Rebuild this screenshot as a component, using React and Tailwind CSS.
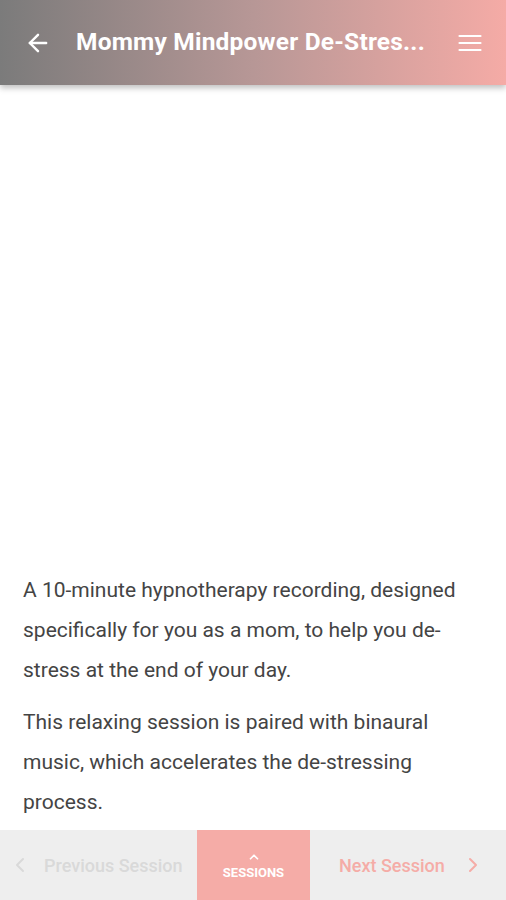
import { ArrowLeft, ChevronLeft, ChevronRight, ChevronUp } from 'lucide-react'

export default function App() {
    return (
        <div className="flex flex-col h-[900px] w-[506px] bg-white font-['Roboto',sans-serif] overflow-hidden">
            <header className="relative z-10 flex items-center h-[85px] shrink-0 bg-gradient-to-r from-[#7b7b7b] via-[#b79796] to-[#f5aba6] shadow-[0_3px_6px_rgba(0,0,0,0.25)]">
                <button className="w-[76px] flex justify-center text-white">
                    <ArrowLeft size={28} strokeWidth={2.1} />
                </button>
                <h1 className="flex-1 whitespace-nowrap text-white font-bold text-[24.5px] tracking-[0.2px]">
                    Mommy Mindpower De-Stres...
                </h1>
                <button className="w-[72px] flex justify-center text-white">
                    <svg width="24" height="18" viewBox="0 0 24 18" fill="none" stroke="currentColor" strokeWidth="2.2" strokeLinecap="round">
                        <line x1="1.5" y1="2" x2="22.5" y2="2" />
                        <line x1="1.5" y1="9" x2="22.5" y2="9" />
                        <line x1="1.5" y1="16" x2="22.5" y2="16" />
                    </svg>
                </button>
            </header>

            <main className="flex-1 flex flex-col justify-end px-[23px] pb-[8px] text-[#444444] text-[21px] leading-[40px]">
                <p>A 10-minute hypnotherapy recording, designed specifically for you as a mom, to help you de-stress at the end of your day.</p>
                <p className="mt-[12px]">This relaxing session is paired with binaural music, which accelerates the de-stressing process.</p>
            </main>

            <footer className="flex h-[70px] shrink-0 bg-[#eeeeee]">
                <button className="w-[197px] flex items-center pl-[8px] text-[#d9d9d9]">
                    <ChevronLeft size={24} strokeWidth={2} />
                    <span className="ml-[12px] text-[18px] font-medium">Previous Session</span>
                </button>
                <button className="w-[113px] flex flex-col items-center justify-center bg-[#f5aca7] text-white">
                    <ChevronUp size={14} strokeWidth={3} />
                    <span className="text-[13px] font-bold leading-[16px] mt-[1px]">SESSIONS</span>
                </button>
                <button className="flex-1 flex items-center pl-[29px] text-[#f5aca7]">
                    <span className="text-[18px] font-medium">Next Session</span>
                    <ChevronRight size={24} strokeWidth={2} className="ml-[16px]" />
                </button>
            </footer>
        </div>
    )
}
